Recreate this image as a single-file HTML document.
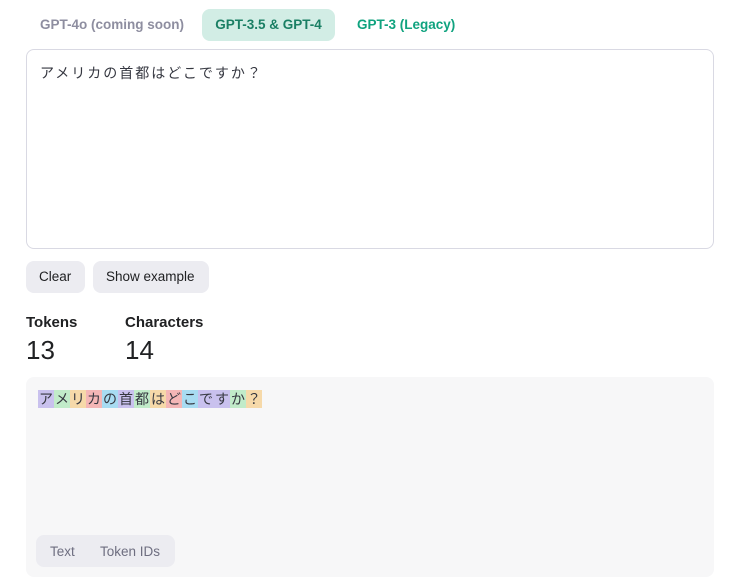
<!DOCTYPE html>
<html><head><meta charset="utf-8"><style>
*{box-sizing:border-box;margin:0;padding:0}
body{width:740px;height:583px;background:#fff;font-family:"Liberation Sans","Noto Sans CJK JP",sans-serif;position:relative;overflow:hidden;color:#202123}
.tab{position:absolute;top:9px;height:32px;line-height:32px;font-size:13.5px;font-weight:bold;border-radius:8px;padding:0 14px;white-space:nowrap}
.box{position:absolute;left:26px;top:49px;width:688px;height:200px;border:1px solid #d9d9e3;border-radius:8px}
.jp{font-family:"Noto Sans CJK JP",sans-serif;font-size:14px}
.btn{position:absolute;top:261px;height:32px;line-height:32px;background:#ececf1;border-radius:8px;font-size:13.5px;padding:0 13px;color:#202123;white-space:nowrap}
.lab{position:absolute;top:314px;font-size:15px;font-weight:bold}
.num{position:absolute;top:335px;font-size:26px;color:#202123;font-weight:300}
.out{position:absolute;left:26px;top:377px;width:688px;height:200px;background:#f7f7f8;border-radius:8px}
.tok{position:absolute;left:38px;top:390px;height:18px;display:flex}
.tok span{display:inline-block;width:16px;height:18px;line-height:18px;text-align:center;font-family:"Noto Sans CJK JP",sans-serif;font-size:14px;color:#353740}
.p{background:#c9c1ee}.g{background:#c1ebc9}.y{background:#f6d9a9}.r{background:#f4b6b6}.b{background:#a8dcf2}
.seg{position:absolute;left:36px;top:535px;width:139px;height:32px;background:#ececf1;border-radius:8px;font-size:13.5px;color:#6e6e80}
</style></head><body>
<div class="tab" style="left:26px;color:#8e8ea0">GPT-4o (coming soon)</div>
<div class="tab" style="left:202px;width:133px;padding:0;text-align:center;background:#d2ede5;color:#1a7f64">GPT-3.5 &amp; GPT-4</div>
<div class="tab" style="left:343px;color:#10a37f">GPT-3 (Legacy)</div>
<div class="box"><div class="jp" style="position:absolute;left:13px;top:13px;letter-spacing:2px;color:#353740">アメリカの首都はどこですか？</div></div>
<div class="btn" style="left:26px;width:59px">Clear</div>
<div class="btn" style="left:93px;width:116px">Show example</div>
<div class="lab" style="left:26px">Tokens</div>
<div class="lab" style="left:125px">Characters</div>
<div class="num" style="left:26px">13</div>
<div class="num" style="left:125px">14</div>
<div class="out"></div>
<div class="tok"><span class="p">ア</span><span class="g">メ</span><span class="y">リ</span><span class="r">カ</span><span class="b">の</span><span class="p">首</span><span class="g">都</span><span class="y">は</span><span class="r">ど</span><span class="b">こ</span><span class="p">で</span><span class="p">す</span><span class="g">か</span><span class="y">？</span></div>
<div class="seg"><span style="position:absolute;left:14px;top:9px">Text</span><span style="position:absolute;left:64px;top:9px">Token IDs</span></div>
</body></html>
